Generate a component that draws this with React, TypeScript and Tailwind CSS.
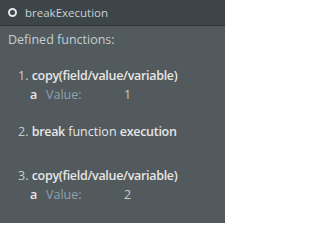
export default function App() {
  return (
    <div className="w-[225px] h-[223px] bg-[#525a5d] overflow-hidden" style={{ fontFamily: '"Open Sans", sans-serif' }}>
      <div className="h-[26px] bg-[#3d4548] border-b border-[#2c3234] flex items-center pl-[8px] gap-[8px]">
        <svg width="9" height="9" viewBox="0 0 9 9">
          <circle cx="4.5" cy="4.5" r="3.5" fill="none" stroke="#e4e8ea" strokeWidth="2" />
        </svg>
        <span className="text-[11.5px] text-[#c9d2d6] leading-none">breakExecution</span>
      </div>
      <div className="pl-[8px] pt-[6px] text-[12.5px] text-[#c3cfd5]">
        <div className="leading-[16px]">Defined functions:</div>
        <div className="pl-[10px] mt-[18px]">
          <div className="leading-[19px]"><span className="text-[#c3cfd5]">1. </span><span className="font-semibold text-[#e6e6e6] tracking-[-0.3px]">copy(field/value/variable)</span></div>
          <div className="flex leading-[19px] pl-[12px]">
            <span className="font-semibold text-[#e6e6e6] w-[16px]">a</span>
            <span className="text-[#8fa2ad] w-[78px]">Value:</span>
            <span className="text-[#c3cfd5]">1</span>
          </div>
          <div className="leading-[19px] mt-[18px]"><span>2. </span><span className="font-semibold text-[#e6e6e6] tracking-[-0.3px]">break</span><span className="text-[#e6e6e6]"> function </span><span className="font-semibold text-[#e6e6e6] tracking-[-0.3px]">execution</span></div>
          <div className="leading-[19px] mt-[25px]"><span>3. </span><span className="font-semibold text-[#e6e6e6] tracking-[-0.3px]">copy(field/value/variable)</span></div>
          <div className="flex leading-[19px] pl-[12px]">
            <span className="font-semibold text-[#e6e6e6] w-[16px]">a</span>
            <span className="text-[#8fa2ad] w-[78px]">Value:</span>
            <span className="text-[#c3cfd5]">2</span>
          </div>
        </div>
      </div>
    </div>
  );
}
